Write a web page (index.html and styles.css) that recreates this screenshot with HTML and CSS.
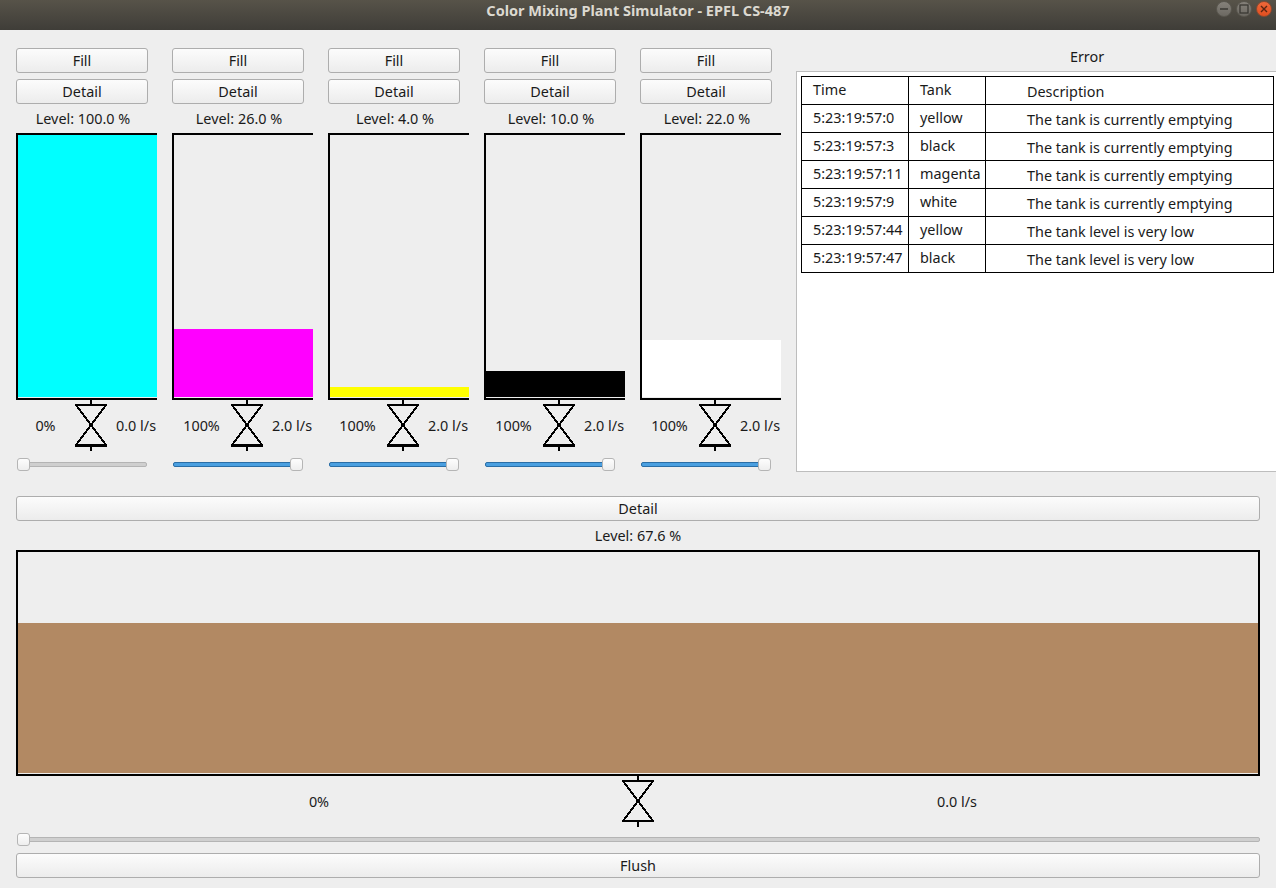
FILE: index.html
```html
<!DOCTYPE html>
<html lang="en">
<head>
    <meta charset="UTF-8">
    <title>Color Mixing Plant Simulator - EPFL CS-487</title>
    <link rel="stylesheet" href="styles.css">
</head>
<body>
    <div class="titlebar">
        <span class="title">Color Mixing Plant Simulator - EPFL CS-487</span>
        <div class="win-buttons">
            <span class="win-btn"><svg width="10" height="10" viewBox="0 0 10 10"><path d="M1 5H9" stroke="#3a3833" stroke-width="1.5"/></svg></span>
            <span class="win-btn"><svg width="10" height="10" viewBox="0 0 10 10"><rect x="1" y="1" width="8" height="8" fill="none" stroke="#3a3833" stroke-width="1.3"/></svg></span>
            <span class="win-btn close"><svg width="10" height="10" viewBox="0 0 10 10"><path d="M2 2L8 8M8 2L2 8" stroke="#5a2512" stroke-width="1.4"/></svg></span>
        </div>
    </div>

    <div class="main">
        <div class="top">
            <div class="tank-col">
                <button class="btn">Fill</button>
                <button class="btn">Detail</button>
                <div class="level">Level: 100.0 %</div>
                <div class="tank"><div class="fill cyan" style="height: 262px"></div></div>
                <div class="valve-row">
                    <span class="pct">0%</span>
                    <svg class="valve" width="32" height="51" viewBox="0 0 32 51"><path class="valve-line" d="M16 0V5M1 5H31L1 45H31ZM16 46V51"/><path class="valve-base" d="M0 45.5H32"/></svg>
                    <span class="flow">0.0 l/s</span>
                </div>
                <div class="slider"><div class="thumb"></div></div>
            </div>
            <div class="tank-col">
                <button class="btn">Fill</button>
                <button class="btn">Detail</button>
                <div class="level">Level: 26.0 %</div>
                <div class="tank"><div class="fill magenta" style="height: 68px"></div></div>
                <div class="valve-row">
                    <span class="pct">100%</span>
                    <svg class="valve" width="32" height="51" viewBox="0 0 32 51"><path class="valve-line" d="M16 0V5M1 5H31L1 45H31ZM16 46V51"/><path class="valve-base" d="M0 45.5H32"/></svg>
                    <span class="flow">2.0 l/s</span>
                </div>
                <div class="slider on"><div class="thumb"></div></div>
            </div>
            <div class="tank-col">
                <button class="btn">Fill</button>
                <button class="btn">Detail</button>
                <div class="level">Level: 4.0 %</div>
                <div class="tank"><div class="fill yellow" style="height: 10px"></div></div>
                <div class="valve-row">
                    <span class="pct">100%</span>
                    <svg class="valve" width="32" height="51" viewBox="0 0 32 51"><path class="valve-line" d="M16 0V5M1 5H31L1 45H31ZM16 46V51"/><path class="valve-base" d="M0 45.5H32"/></svg>
                    <span class="flow">2.0 l/s</span>
                </div>
                <div class="slider on"><div class="thumb"></div></div>
            </div>
            <div class="tank-col">
                <button class="btn">Fill</button>
                <button class="btn">Detail</button>
                <div class="level">Level: 10.0 %</div>
                <div class="tank"><div class="fill black" style="height: 26px"></div></div>
                <div class="valve-row">
                    <span class="pct">100%</span>
                    <svg class="valve" width="32" height="51" viewBox="0 0 32 51"><path class="valve-line" d="M16 0V5M1 5H31L1 45H31ZM16 46V51"/><path class="valve-base" d="M0 45.5H32"/></svg>
                    <span class="flow">2.0 l/s</span>
                </div>
                <div class="slider on"><div class="thumb"></div></div>
            </div>
            <div class="tank-col">
                <button class="btn">Fill</button>
                <button class="btn">Detail</button>
                <div class="level">Level: 22.0 %</div>
                <div class="tank"><div class="fill white" style="height: 57px"></div></div>
                <div class="valve-row">
                    <span class="pct">100%</span>
                    <svg class="valve" width="32" height="51" viewBox="0 0 32 51"><path class="valve-line" d="M16 0V5M1 5H31L1 45H31ZM16 46V51"/><path class="valve-base" d="M0 45.5H32"/></svg>
                    <span class="flow">2.0 l/s</span>
                </div>
                <div class="slider on"><div class="thumb"></div></div>
            </div>

            <div class="error-col">
                <div class="error-title">Error</div>
                <div class="error-panel">
                    <table class="error-table">
                        <tr><td>Time</td><td>Tank</td><td class="desc">Description</td></tr>
                        <tr><td>5:23:19:57:0</td><td>yellow</td><td class="desc">The tank is currently emptying</td></tr>
                        <tr><td>5:23:19:57:3</td><td>black</td><td class="desc">The tank is currently emptying</td></tr>
                        <tr><td>5:23:19:57:11</td><td>magenta</td><td class="desc">The tank is currently emptying</td></tr>
                        <tr><td>5:23:19:57:9</td><td>white</td><td class="desc">The tank is currently emptying</td></tr>
                        <tr><td>5:23:19:57:44</td><td>yellow</td><td class="desc">The tank level is very low</td></tr>
                        <tr><td>5:23:19:57:47</td><td>black</td><td class="desc">The tank level is very low</td></tr>
                    </table>
                </div>
            </div>
        </div>

        <div class="bottom">
            <button class="btn wide">Detail</button>
            <div class="level">Level: 67.6 %</div>
            <div class="tank big"><div class="fill brown" style="height: 150px"></div></div>
            <div class="valve-row big-row">
                <span class="cell">0%</span>
                <svg class="valve" width="32" height="51" viewBox="0 0 32 51"><path class="valve-line" d="M16 0V5M1 5H31L1 45H31ZM16 46V51"/></svg>
                <span class="cell">0.0 l/s</span>
            </div>
            <div class="slider wide-slider"><div class="thumb"></div></div>
            <button class="btn wide">Flush</button>
        </div>
    </div>
</body>
</html>
```

FILE: styles.css
```css
html, body {
    height: 100%;
}
body {
    margin: 0;
    background: #eeeeee;
    font-family: "Noto Sans", "Open Sans", sans-serif;
    font-size: 14.4px;
    color: #1a1a1a;
    overflow: hidden;
}
.titlebar {
    height: 30px;
    box-sizing: border-box;
    padding-bottom: 11px;
    background: linear-gradient(to bottom, #575349, #3f3d38);
    display: flex;
    align-items: center;
    justify-content: center;
    position: relative;
}
.title {
    color: #dcd9d0;
    font-weight: bold;
    font-size: 14.5px;
}
.win-buttons {
    position: absolute;
    top: 1px;
    right: 4px;
    display: flex;
    gap: 4px;
}
.win-btn {
    width: 16px;
    height: 16px;
    box-sizing: border-box;
    border-radius: 50%;
    background: linear-gradient(to bottom, #85817a, #6c6962);
    border: 1px solid #5a574f;
    display: flex;
    align-items: center;
    justify-content: center;
}
.win-btn.close {
    background: linear-gradient(to bottom, #f0683a, #e04f20);
    border-color: #8c4a30;
}
.main {
    padding: 18px 16px 0;
}
.top {
    display: flex;
    gap: 15px;
    margin-right: -16px;
}
.tank-col {
    width: 141px;
    flex: none;
}
.btn {
    display: block;
    width: 132px;
    height: 25px;
    padding: 0;
    margin-bottom: 6px;
    border: 1px solid #adadad;
    border-radius: 3px;
    background: linear-gradient(to bottom, #fcfcfc, #ececec);
    font-family: inherit;
    font-size: 14.4px;
    color: #1a1a1a;
}
.btn.wide {
    width: 100%;
    margin-bottom: 0;
}
.level {
    height: 23px;
    line-height: 17px;
    text-align: center;
}
.tank-col .level {
    width: 134px;
}
.tank {
    height: 262px;
    border: 2px solid #000;
    border-right: none;
    padding-bottom: 1px;
    display: flex;
    align-items: flex-end;
    box-sizing: content-box;
}
.fill {
    width: 100%;
}
.cyan { background: #00ffff; }
.magenta { background: #ff00ff; }
.yellow { background: #ffff00; }
.black { background: #000; }
.white { background: #fff; }
.brown { background: #b28963; }
.valve-row {
    display: flex;
    height: 51px;
    align-items: center;
}
.valve {
    flex: none;
    shape-rendering: crispEdges;
}
.valve-line {
    fill: none;
    stroke: #000;
    stroke-width: 2;
}
.valve-base {
    fill: none;
    stroke: #000;
    stroke-width: 3;
}
.pct {
    width: 59px;
    text-align: center;
}
.flow {
    padding-left: 9px;
    white-space: nowrap;
}
.slider {
    position: relative;
    height: 5px;
    margin: 11px 0 0 1px;
    width: 130px;
    background: #cfcfcf;
    border: 1px solid #b4b4b4;
    box-sizing: border-box;
    border-radius: 2px;
}
.slider.on {
    background: #4a9fe0;
    border-color: #2a6ea6;
}
.thumb {
    position: absolute;
    left: -1px;
    top: -5px;
    width: 13px;
    height: 13px;
    box-sizing: border-box;
    background: linear-gradient(to bottom, #fdfdfd, #eeeeee);
    border: 1px solid #b5b5b5;
    border-radius: 3px;
}
.slider.on .thumb {
    left: auto;
    right: -1px;
}
.error-col {
    flex: 1;
}
.error-title {
    height: 23px;
    line-height: 18px;
    text-align: center;
    padding-left: 100px;
}
.error-panel {
    height: 401px;
    box-sizing: border-box;
    background: #fff;
    border: 1px solid #bdbdbd;
    border-right: none;
    padding: 4px;
}
.error-table {
    border-collapse: collapse;
    table-layout: fixed;
    width: 473px;
}
.error-table td {
    border: 1px solid #000;
    height: 28px;
    padding: 0 0 2px 11px;
    white-space: nowrap;
    box-sizing: border-box;
}
.error-table td:nth-child(1) { width: 107px; }
.error-table td:nth-child(2) { width: 77px; }
.error-table .desc {
    padding: 2px 0 0 41px;
}
.bottom {
    margin-top: 24px;
}
.bottom .level {
    height: 29px;
    line-height: 30px;
}
.tank.big {
    height: 221px;
    border-right: 2px solid #000;
}
.big-row .cell {
    flex: 1;
    text-align: center;
}
.wide-slider {
    width: auto;
    margin-top: 10px;
    margin-bottom: 11px;
}
```
